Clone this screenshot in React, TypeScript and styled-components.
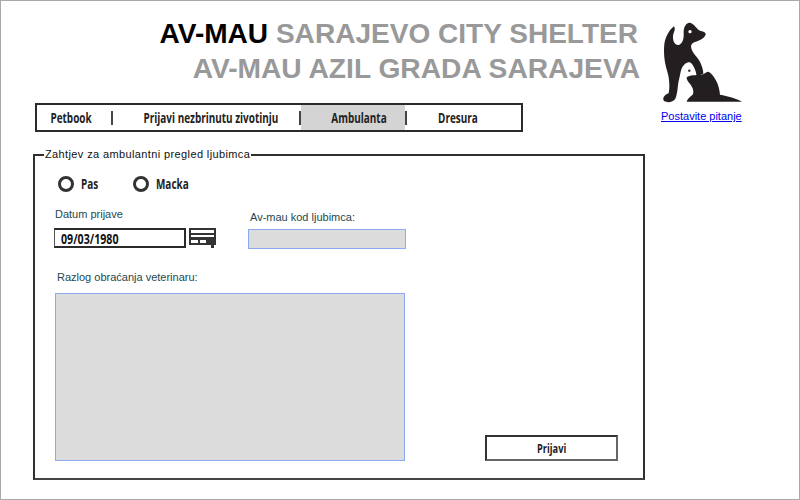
import React from "react";
import styled, { createGlobalStyle } from "styled-components";

const Global = createGlobalStyle`
  html, body { margin: 0; padding: 0; background: #fff; }
  * { box-sizing: border-box; }
`;

const Page = styled.div`
  width: 800px;
  height: 500px;
  border: 1px solid #aaa;
  background: #fff;
  font-family: "Liberation Sans", Arial, sans-serif;
  overflow: hidden;
`;

const Top = styled.div`
  display: flex;
  height: 131px;
`;

const LeftColumn = styled.div`
  flex: none;
  width: 639px;
  padding-top: 16px;
`;

const TitleLine = styled.h1<{ $inset?: number; $size: number }>`
  margin: 0;
  padding-right: ${(p) => p.$inset ?? 0}px;
  font-size: ${(p) => p.$size}px;
  line-height: 34px;
  font-weight: 700;
  text-align: right;
  color: #999;
  white-space: nowrap;
`;

const Brand = styled.span`
  color: #000;
`;

const LogoColumn = styled.div`
  display: flex;
  flex-direction: column;
  align-items: flex-start;
  padding: 19px 0 0 20px;
`;

const Logo = styled.svg`
  display: block;
  flex: none;
  width: 83.33px;
  height: 83.33px;
`;

const HelpLink = styled.a`
  margin: 7px 0 0 1px;
  font-size: 11px;
  line-height: 13px;
  color: #00e;
  text-decoration: underline;
  white-space: nowrap;
`;

const Nav = styled.nav`
  display: flex;
  align-items: center;
  width: 488px;
  height: 29px;
  margin: 18px 0 0 34px;
  border: 2px solid #2b2b2b;
`;

const NavItem = styled.div<{ $w: number; $active?: boolean; $before?: number; $after?: number }>`
  display: flex;
  align-items: center;
  justify-content: center;
  width: ${(p) => p.$w}px;
  height: 100%;
  padding-left: ${(p) => p.$before ?? 0}px;
  padding-right: ${(p) => p.$after ?? 0}px;
  background: ${(p) => (p.$active ? "#d4d4d4" : "transparent")};
`;

const NavSep = styled.span`
  flex: none;
  width: 2px;
  height: 14px;
  background: #444;
`;

const Sketch = styled.span<{ $size?: number }>`
  display: inline-block;
  font-family: "Open Sans", sans-serif;
  font-weight: 700;
  font-size: ${(p) => p.$size ?? 14}px;
  line-height: 16px;
  color: #222;
  transform: scaleX(0.71);
  white-space: nowrap;
`;

const Form = styled.fieldset`
  display: block;
  width: 612px;
  height: 332px;
  margin: 16px 0 0 32px;
  padding: 0;
  border: 2px solid #2f2f2f;
  border-bottom-color: #444;
`;

const FormLegend = styled.legend`
  margin-left: 9px;
  padding: 0 1px;
  font-size: 11px;
  line-height: 13px;
  letter-spacing: 0.38px;
  color: #111;
`;

const FormBody = styled.div`
  padding-left: 20px;
`;

const RadioRow = styled.div`
  display: flex;
  align-items: center;
  height: 18px;
  margin-top: 14px;
  padding-left: 3px;
`;

const RadioOption = styled.label<{ $w: number }>`
  display: flex;
  align-items: center;
  gap: 7px;
  width: ${(p) => p.$w}px;
`;

const RadioMark = styled.span`
  flex: none;
  width: 16px;
  height: 16px;
  border: 3px solid #333;
  border-radius: 50%;
`;

const RadioText = styled(Sketch)`
  transform-origin: left center;
`;

const FieldsRow = styled.div`
  display: flex;
  margin-top: 15px;
`;

const DateField = styled.div`
  width: 193px;
`;

const CodeField = styled.div`
  padding-top: 3px;
`;

const Label = styled.div<{ $indent?: number }>`
  margin-left: ${(p) => p.$indent ?? 0}px;
  font-size: 11px;
  line-height: 13px;
  color: #24484e;
  white-space: nowrap;
`;

const DateRow = styled.div`
  display: flex;
  align-items: center;
  gap: 3px;
  margin-top: 7px;
  margin-left: -1px;
`;

const DateInput = styled.div`
  display: flex;
  align-items: center;
  width: 132px;
  height: 20px;
  padding-left: 6px;
  border: 2px solid #2b2b2b;
  border-left: 1px solid #555;
`;

const DateText = styled(Sketch)`
  transform-origin: left center;
  color: #111;
`;

const CodeInput = styled.div`
  width: 158px;
  height: 20px;
  margin-top: 5px;
  background: #dcdcdc;
  border: 1px solid #8eaaf5;
`;

const BottomRow = styled.div`
  display: flex;
  align-items: flex-end;
  margin-top: 22px;
`;

const ReasonField = styled.div`
  width: 430px;
`;

const ReasonInput = styled.div`
  width: 350px;
  height: 168px;
  margin-top: 9px;
  background: #dcdcdc;
  border: 1px solid #8eaaf5;
`;

const SubmitButton = styled.button`
  display: flex;
  align-items: center;
  justify-content: center;
  width: 133px;
  height: 26px;
  padding: 0;
  background: #fff;
  border: 2px solid #333;
  border-right-color: #666;
  border-bottom-color: #666;
`;

const CalendarIcon = () => (
  <svg width="28" height="20" viewBox="0 0 28 20" aria-hidden="true">
    <rect x="0" y="0" width="27" height="17" fill="#333" />
    <rect x="2" y="2" width="23" height="3" fill="#fff" />
    <rect x="2" y="7" width="23" height="2" fill="#fff" />
    <rect x="2" y="12" width="7" height="3" fill="#fff" />
    <rect x="11" y="12" width="6" height="3" fill="#fff" />
    <path d="M19 12h8v5h-2v3h-3v-3h-3z" fill="#333" />
  </svg>
);

const PetLogo = () => (
  <Logo viewBox="60 60 250 250" aria-hidden="true">
    <path
      fill="#231f20"
      d="M100 80 C88 90 76 110 73 132 C70 165 74 190 82 215 C88 235 90 260 86 280 C72 285 66 295 72 303 C82 310 100 306 106 296 C114 280 112 255 118 235 C122 220 122 205 132 195 C140 186 150 184 156 192 C162 200 168 212 170 228 L190 222 C190 210 186 200 182 190 C178 180 172 173 165 165 C153 150 148 135 160 128 C172 122 190 120 197 104 C198 96 188 94 180 92 C170 88 165 74 152 69 C140 66 130 80 131 100 C132 115 128 132 116 135 C104 137 98 122 99 108 C100 98 106 92 104 84 C103 80 101 79 100 80 Z"
    />
    <circle cx="150" cy="95" r="5" fill="#fff" />
    <path
      fill="#231f20"
      d="M140 232 C150 224 165 226 185 224 C195 222 198 214 206 215 C225 228 238 255 240 284 C262 288 290 295 306 305 L140 305 C142 296 150 290 158 284 C164 272 156 258 147 248 C142 242 140 238 140 232 Z"
    />
    <circle cx="148" cy="212" r="3.5" fill="#231f20" />
  </Logo>
);

export default function App() {
  return (
    <Page>
      <Global />
      <Top>
        <LeftColumn>
          <TitleLine $inset={2} $size={28.05}><Brand>AV-MAU</Brand> SARAJEVO CITY SHELTER</TitleLine>
          <TitleLine $size={28.2}>AV-MAU AZIL GRADA SARAJEVA</TitleLine>
          <Nav>
            <NavItem $w={74} $after={5}><Sketch>Petbook</Sketch></NavItem>
            <NavSep />
            <NavItem $w={186} $before={10}><Sketch>Prijavi nezbrinutu zivotinju</Sketch></NavItem>
            <NavSep />
            <NavItem $w={104} $active $before={12}><Sketch>Ambulanta</Sketch></NavItem>
            <NavSep />
            <NavItem $w={113} $after={11}><Sketch>Dresura</Sketch></NavItem>
          </Nav>
        </LeftColumn>
        <LogoColumn>
          <PetLogo />
          <HelpLink href="#">Postavite pitanje</HelpLink>
        </LogoColumn>
      </Top>
      <Form>
        <FormLegend>Zahtjev za ambulantni pregled ljubimca</FormLegend>
        <FormBody>
          <RadioRow>
            <RadioOption $w={75}><RadioMark /><RadioText>Pas</RadioText></RadioOption>
            <RadioOption $w={70}><RadioMark /><RadioText>Macka</RadioText></RadioOption>
          </RadioRow>
          <FieldsRow>
            <DateField>
              <Label>Datum prijave</Label>
              <DateRow>
                <DateInput><DateText $size={15}>09/03/1980</DateText></DateInput>
                <CalendarIcon />
              </DateRow>
            </DateField>
            <CodeField>
              <Label $indent={2}>Av-mau kod ljubimca:</Label>
              <CodeInput />
            </CodeField>
          </FieldsRow>
          <BottomRow>
            <ReasonField>
              <Label $indent={2}>Razlog obraćanja veterinaru:</Label>
              <ReasonInput />
            </ReasonField>
            <SubmitButton><Sketch $size={13}>Prijavi</Sketch></SubmitButton>
          </BottomRow>
        </FormBody>
      </Form>
    </Page>
  );
}
